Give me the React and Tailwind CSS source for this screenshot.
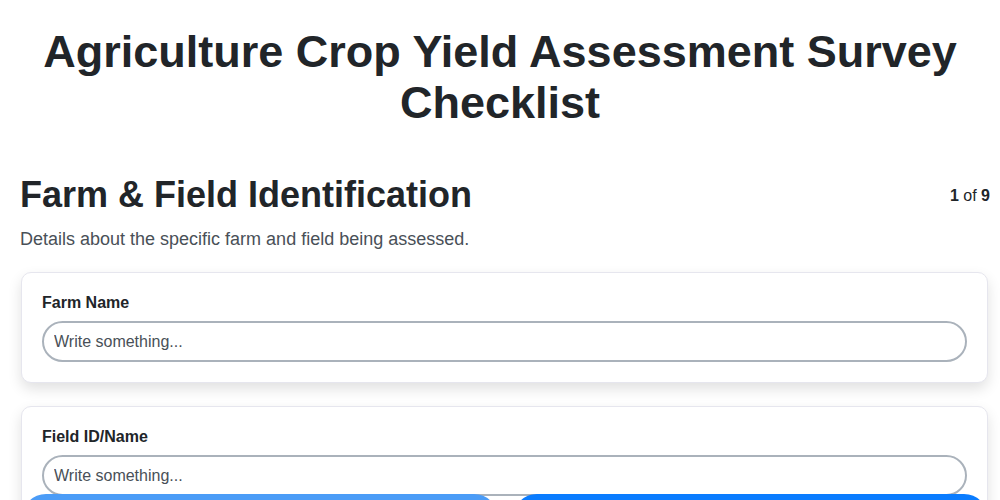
import React from "react";

function Field({ label }) {
  return (
    <div className="rounded-[10px] border border-[#e6e6ee] bg-white px-5 pt-[20px] pb-5 shadow-[0_6px_14px_rgba(0,0,0,0.12)]">
      <div className="text-[16px] font-bold text-[#212529] leading-[20px] mb-[8px]">{label}</div>
      <input
        className="block w-full h-[41px] rounded-full border-2 border-[#aab2bb] bg-white px-[10px] text-[16px] text-[#212529] placeholder:text-[#495057] outline-none"
        placeholder="Write something..."
      />
    </div>
  );
}

export default function App() {
  return (
    <div className="min-h-[500px] bg-white font-['Liberation_Sans',Arial,sans-serif] text-[#212529]">
      <h1 className="pt-[26px] text-center text-[45px] font-bold leading-[51px] px-5">
        Agriculture Crop Yield Assessment Survey Checklist
      </h1>
      <div className="pl-[20px] pr-[10px] mt-[46px]">
        <div className="flex items-start justify-between">
          <h2 className="text-[36px] font-bold leading-[42px]">Farm &amp; Field Identification</h2>
          <div className="text-[16px] mt-[10px]"><b>1</b> of <b>9</b></div>
        </div>
        <p className="mt-[12px] text-[18px] text-[#495057] leading-[22px]">
          Details about the specific farm and field being assessed.
        </p>
        <div className="mt-[22px] flex flex-col gap-[23px] pl-px pr-[2px]">
          <Field label="Farm Name" />
          <Field label="Field ID/Name" />
        </div>
      </div>
      <div className="fixed left-[22px] right-[12px] top-[494px] flex gap-[15px]">
        <button aria-label="Previous" className="flex-1 h-[48px] rounded-full bg-[#4b9cf7]" />
        <button aria-label="Next" className="flex-1 h-[48px] rounded-full bg-[#0a7cff]" />
      </div>
    </div>
  );
}
